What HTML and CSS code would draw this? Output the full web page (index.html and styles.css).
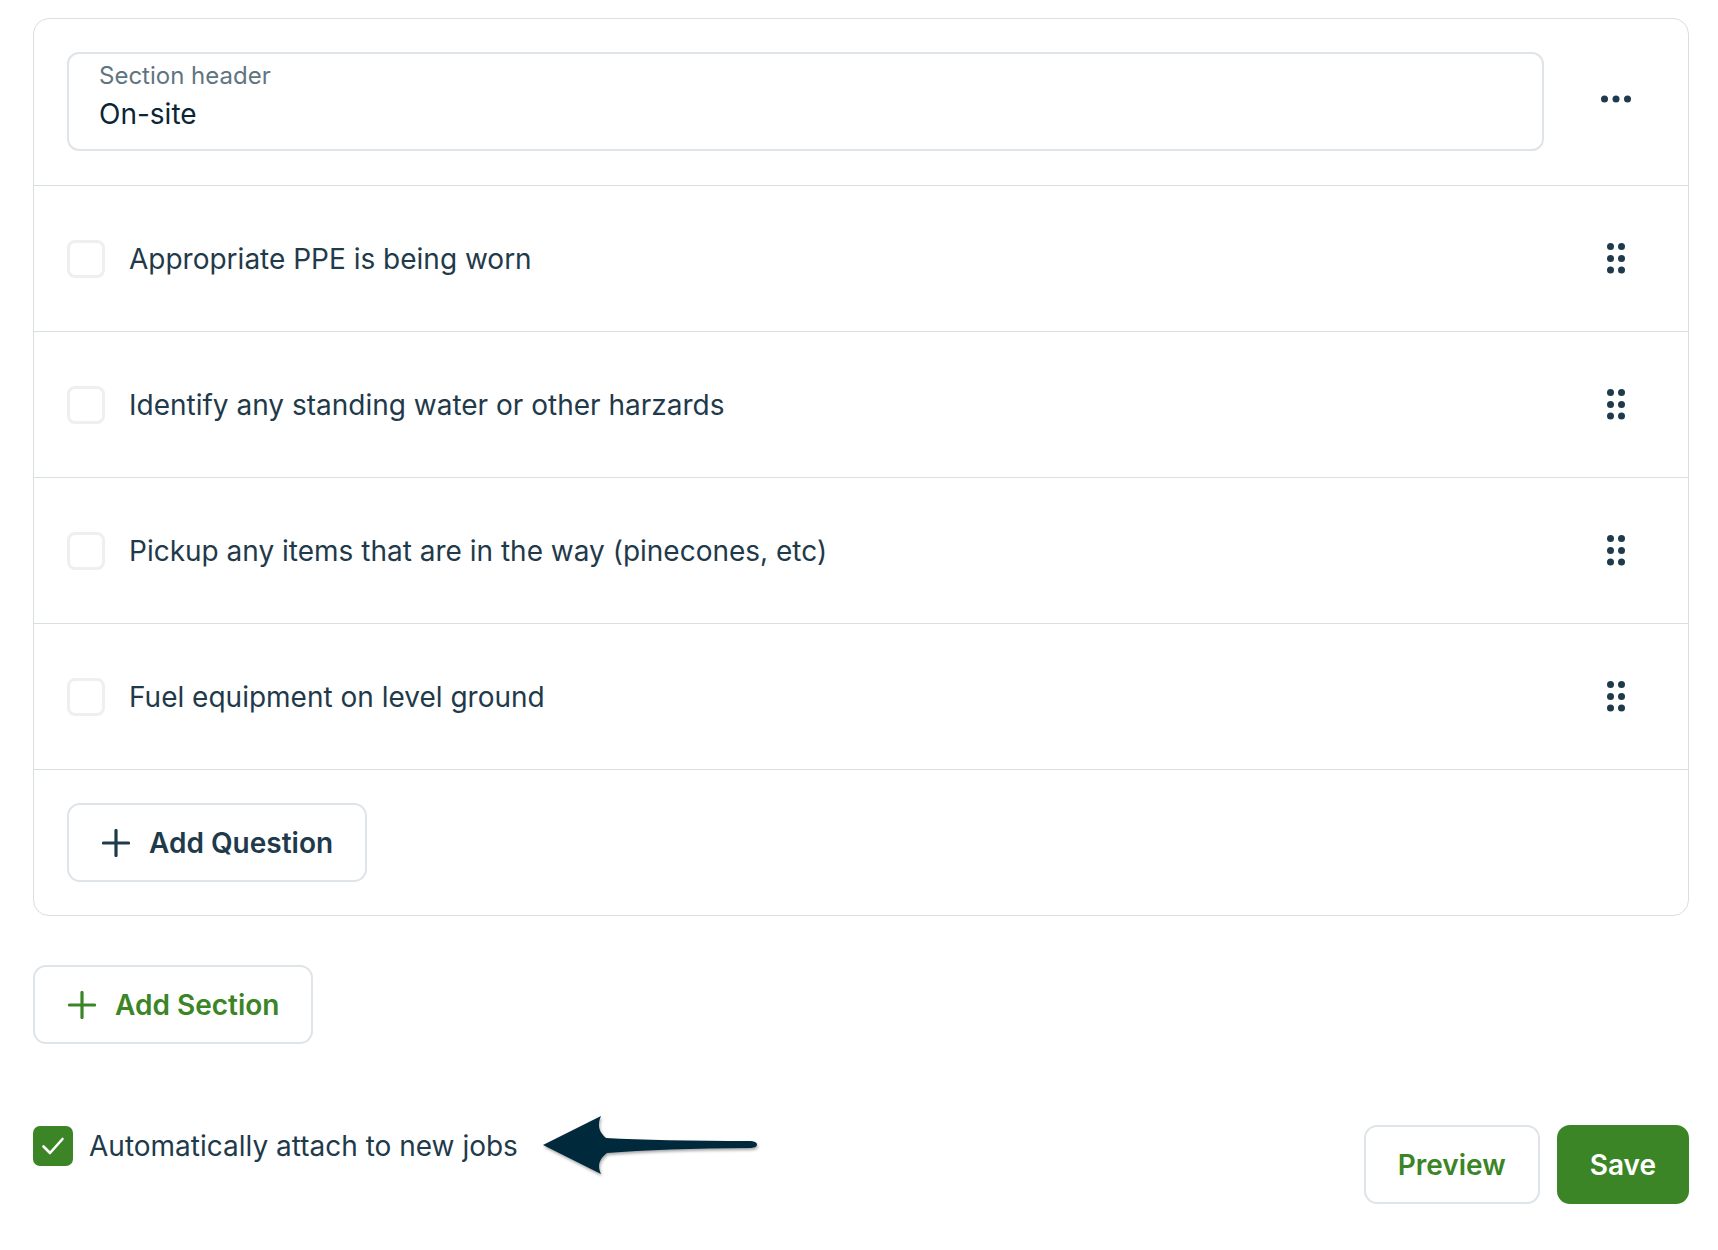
FILE: index.html
```html
<!DOCTYPE html>
<html lang="en">
<head>
<meta charset="utf-8">
<title>Checklist editor</title>
<link rel="stylesheet" href="styles.css">
</head>
<body>
<main class="page">
  <section class="card">
    <div class="card-header">
      <div class="field">
        <span class="field-label">Section header</span>
        <span class="field-value">On-site</span>
      </div>
      <button class="icon-btn" aria-label="More">
        <svg width="30" height="8" viewBox="0 0 30 8"><circle cx="3.5" cy="4" r="3.5"/><circle cx="15" cy="4" r="3.5"/><circle cx="26.5" cy="4" r="3.5"/></svg>
      </button>
    </div>
    <div class="row">
      <span class="box"></span>
      <span class="row-text">Appropriate PPE is being worn</span>
      <span class="handle"><svg width="18" height="31" viewBox="0 0 18 31"><circle cx="3.5" cy="3.5" r="3.5"/><circle cx="14.5" cy="3.5" r="3.5"/><circle cx="3.5" cy="15.5" r="3.5"/><circle cx="14.5" cy="15.5" r="3.5"/><circle cx="3.5" cy="27" r="3.5"/><circle cx="14.5" cy="27" r="3.5"/></svg></span>
    </div>
    <div class="row">
      <span class="box"></span>
      <span class="row-text">Identify any standing water or other harzards</span>
      <span class="handle"><svg width="18" height="31" viewBox="0 0 18 31"><circle cx="3.5" cy="3.5" r="3.5"/><circle cx="14.5" cy="3.5" r="3.5"/><circle cx="3.5" cy="15.5" r="3.5"/><circle cx="14.5" cy="15.5" r="3.5"/><circle cx="3.5" cy="27" r="3.5"/><circle cx="14.5" cy="27" r="3.5"/></svg></span>
    </div>
    <div class="row">
      <span class="box"></span>
      <span class="row-text">Pickup any items that are in the way (pinecones, etc)</span>
      <span class="handle"><svg width="18" height="31" viewBox="0 0 18 31"><circle cx="3.5" cy="3.5" r="3.5"/><circle cx="14.5" cy="3.5" r="3.5"/><circle cx="3.5" cy="15.5" r="3.5"/><circle cx="14.5" cy="15.5" r="3.5"/><circle cx="3.5" cy="27" r="3.5"/><circle cx="14.5" cy="27" r="3.5"/></svg></span>
    </div>
    <div class="row">
      <span class="box"></span>
      <span class="row-text">Fuel equipment on level ground</span>
      <span class="handle"><svg width="18" height="31" viewBox="0 0 18 31"><circle cx="3.5" cy="3.5" r="3.5"/><circle cx="14.5" cy="3.5" r="3.5"/><circle cx="3.5" cy="15.5" r="3.5"/><circle cx="14.5" cy="15.5" r="3.5"/><circle cx="3.5" cy="27" r="3.5"/><circle cx="14.5" cy="27" r="3.5"/></svg></span>
    </div>
    <div class="card-footer">
      <button class="btn btn-dark">
        <svg width="28" height="28" viewBox="0 0 28 28"><path d="M14 1.5v25M1.5 14h25" stroke-width="3.2" stroke-linecap="round"/></svg>
        <span>Add Question</span>
      </button>
    </div>
  </section>

  <button class="btn btn-green add-section">
    <svg width="28" height="28" viewBox="0 0 28 28"><path d="M14 1.5v25M1.5 14h25" stroke-width="3.2" stroke-linecap="round"/></svg>
    <span>Add Section</span>
  </button>

  <div class="bottom">
    <label class="auto">
      <span class="check">
        <svg width="28" height="28" viewBox="0 0 28 28"><path d="M4.5 14.5l6.5 6.5L23.5 7" fill="none" stroke="#fff" stroke-width="2.6" stroke-linecap="round" stroke-linejoin="round"/></svg>
      </span>
      <span class="auto-text">Automatically attach to new jobs</span>
      <svg class="arrow" width="230" height="72" viewBox="0 0 230 72">
        <defs>
          <filter id="sh" x="-10%" y="-20%" width="120%" height="150%">
            <feDropShadow dx="1" dy="2" stdDeviation="1.5" flood-color="#000" flood-opacity="0.35"/>
          </filter>
        </defs>
        <path filter="url(#sh)" d="M5 34 L63 5 Q57 18 68 27 Q120 30 213 30 Q219 30.5 219 33.5 Q219 36.5 213 37 Q125 37.5 69 42 Q57 51 63 63 Z" fill="#04293a"/>
      </svg>
    </label>
    <div class="actions">
      <button class="btn btn-outline-green">Preview</button>
      <button class="btn btn-solid">Save</button>
    </div>
  </div>
</main>
</body>
</html>
```

FILE: styles.css
```css
* { box-sizing: border-box; }

html, body {
  margin: 0;
  background: #ffffff;
}

body {
  font-family: Inter, "Noto Sans", "Liberation Sans", sans-serif;
  color: #1f3a4a;
}

.page {
  padding: 18px 29px 0 33px;
}

.card {
  border: 1px solid #d9dee3;
  border-radius: 16px;
  background: #fff;
}

.card-header {
  display: flex;
  align-items: center;
  gap: 32px;
  padding: 33px 32px 34px 33px;
  border-bottom: 1px solid #d9dee3;
}

.field {
  flex: 1;
  height: 99px;
  border: 2px solid #dfe4e8;
  border-radius: 12px;
  padding: 6px 30px 0;
  display: flex;
  flex-direction: column;
}

.field-label {
  font-size: 24px;
  line-height: 32px;
  color: #5f7580;
}

.field-value {
  margin-top: 3px;
  font-size: 28px;
  line-height: 38px;
  color: #0a2535;
}

.icon-btn {
  width: 80px;
  height: 40px;
  margin-bottom: 5px;
  border: 0;
  background: transparent;
  padding: 0;
  display: flex;
  align-items: center;
  justify-content: center;
  fill: #1f3a4a;
}

.row {
  height: 146px;
  display: flex;
  align-items: center;
  padding: 0 32px 0 33px;
  border-bottom: 1px solid #d9dee3;
}

.box {
  width: 38px;
  height: 38px;
  border: 3px solid #eeeff0;
  border-radius: 8px;
  flex: none;
}

.row-text {
  flex: 1;
  margin-left: 24px;
  font-size: 28px;
  line-height: 38px;
  color: #1f3a4a;
}

.handle {
  width: 80px;
  display: flex;
  justify-content: center;
  fill: #1f3a4a;
}

.card-footer {
  padding: 33px;
}

.btn {
  font-family: inherit;
  font-size: 28px;
  font-weight: 600;
  height: 79px;
  border-radius: 13px;
  background: #fff;
  border: 2px solid #dfe4e8;
  display: inline-flex;
  align-items: center;
  gap: 19px;
  padding: 0 32px 0 33px;
  cursor: pointer;
}

.btn-dark {
  color: #1f3a4a;
  stroke: #1f3a4a;
}

.btn-green {
  color: #3b8527;
  stroke: #3b8527;
}

.add-section {
  margin-top: 49px;
}

.bottom {
  margin-top: 81px;
  display: flex;
  justify-content: space-between;
  align-items: flex-start;
}

.auto {
  display: flex;
  align-items: center;
  height: 40px;
  margin-top: 1px;
}

.check {
  width: 40px;
  height: 40px;
  border-radius: 7px;
  background: #3b8527;
  display: flex;
  align-items: center;
  justify-content: center;
}

.auto-text {
  margin-left: 16px;
  font-size: 28px;
  line-height: 38px;
  color: #1f3a4a;
}

.arrow {
  margin-left: 20px;
  margin-top: 2px;
}

.actions {
  display: flex;
  gap: 17px;
}

.btn-outline-green {
  color: #3b8527;
  padding: 0 32px;
}

.btn-solid {
  background: #3b8527;
  border-color: #3b8527;
  color: #fff;
  padding: 0 31px;
}
```
